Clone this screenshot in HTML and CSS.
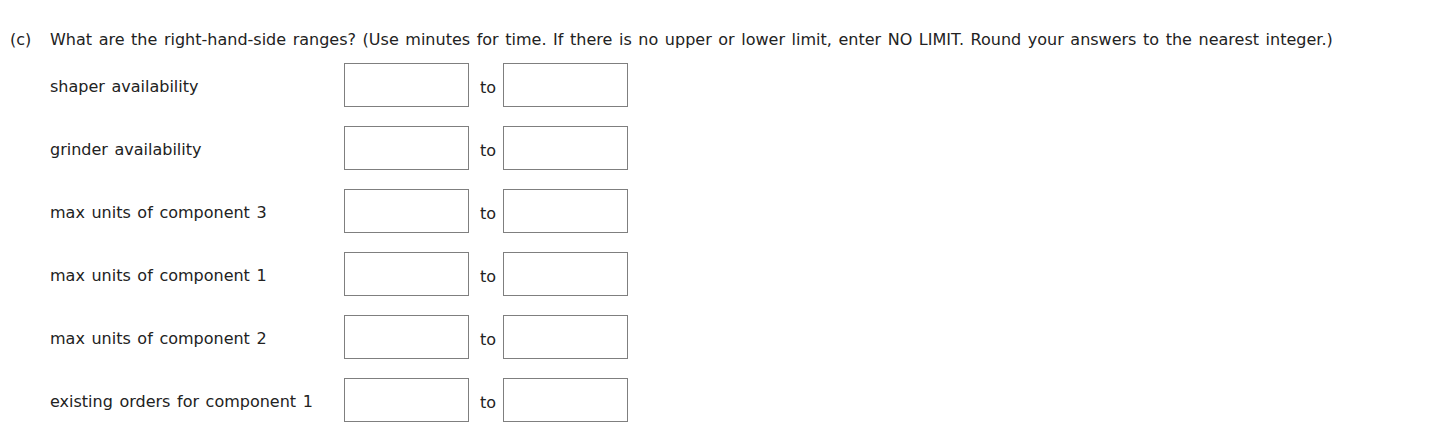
FILE: index.html
```html
<!DOCTYPE html>
<html lang="en">
<head>
    <meta charset="UTF-8">
    <title>Right-hand-side ranges</title>
    <link rel="stylesheet" href="styles.css">
</head>
<body>
    <div class="question">
        <div class="part">(c)</div>
        <div class="part-body">
            <p class="prompt">What are the right-hand-side ranges? (Use minutes for time. If there is no upper or lower limit, enter NO LIMIT. Round your answers to the nearest integer.)</p>

            <div class="ranges">
                <div class="range-label">shaper availability</div>
                <input type="text" class="answer">
                <span class="to">to</span>
                <input type="text" class="answer">

                <div class="range-label">grinder availability</div>
                <input type="text" class="answer">
                <span class="to">to</span>
                <input type="text" class="answer">

                <div class="range-label">max units of component 3</div>
                <input type="text" class="answer">
                <span class="to">to</span>
                <input type="text" class="answer">

                <div class="range-label">max units of component 1</div>
                <input type="text" class="answer">
                <span class="to">to</span>
                <input type="text" class="answer">

                <div class="range-label">max units of component 2</div>
                <input type="text" class="answer">
                <span class="to">to</span>
                <input type="text" class="answer">

                <div class="range-label">existing orders for component 1</div>
                <input type="text" class="answer">
                <span class="to">to</span>
                <input type="text" class="answer">
            </div>
        </div>
    </div>
</body>
</html>
```

FILE: styles.css
```css
* {
    margin: 0;
    padding: 0;
    box-sizing: border-box;
}

body {
    font-family: "DejaVu Sans", Verdana, sans-serif;
    font-size: 16px;
    word-spacing: 1.5px;
    color: #222;
    background: #fff;
    padding: 31px 10px 0;
}

.question {
    display: flex;
}

.part {
    width: 40px;
    flex-shrink: 0;
    line-height: 18px;
}

.prompt {
    line-height: 18px;
    margin-bottom: 14px;
}

.ranges {
    display: grid;
    grid-template-columns: 294px 125px auto 125px;
    justify-content: start;
    row-gap: 19px;
    align-items: center;
}

.range-label {
    line-height: 18px;
    padding-top: 4px;
}

.answer {
    width: 125px;
    height: 44px;
    border: 1px solid #7f7f7f;
    background: #fff;
    font: inherit;
}

.to {
    padding: 4px 7px 0 11px;
}
```
